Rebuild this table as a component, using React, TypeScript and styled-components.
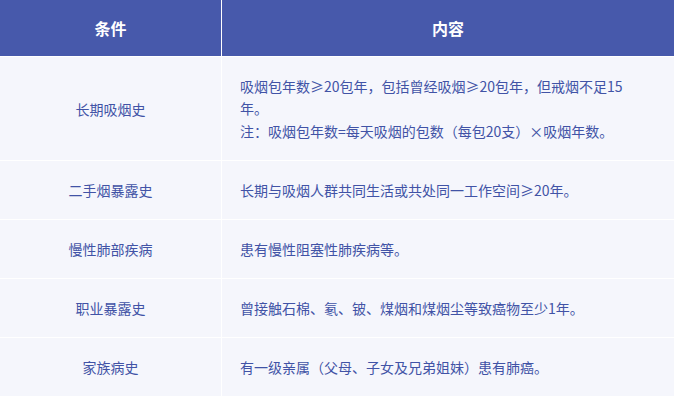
import { FC } from "react";
import styled, { createGlobalStyle } from "styled-components";

interface Row {
    condition: string;
    content: string[];
}

// \u200B lets the line break between "15" and "年", as the original does
const rows: Row[] = [
    {
        condition: "长期吸烟史",
        content: [
            "吸烟包年数≥20包年，包括曾经吸烟≥20包年，但戒烟不足15\u200B年。",
            "注：吸烟包年数=每天吸烟的包数（每包20支）×吸烟年数。",
        ],
    },
    { condition: "二手烟暴露史", content: ["长期与吸烟人群共同生活或共处同一工作空间≥20年。"] },
    { condition: "慢性肺部疾病", content: ["患有慢性阻塞性肺疾病等。"] },
    { condition: "职业暴露史", content: ["曾接触石棉、氡、铍、煤烟和煤烟尘等致癌物至少1年。"] },
    { condition: "家族病史", content: ["有一级亲属（父母、子女及兄弟姐妹）患有肺癌。"] },
];

const App: FC = () => (
    <>
        <GlobalStyle />
        <Table>
            <HeadCell>条件</HeadCell>
            <HeadCell>内容</HeadCell>
            {rows.map((row) => (
                <Row key={row.condition}>
                    <ConditionCell>{row.condition}</ConditionCell>
                    <ContentCell>
                        {row.content.map((line) => (
                            <Paragraph key={line}>{line}</Paragraph>
                        ))}
                    </ContentCell>
                </Row>
            ))}
        </Table>
    </>
);

export default App;

const GlobalStyle = createGlobalStyle`
    body {
        margin: 0;
        background: #ffffff;
        font-family: "Noto Sans CJK SC", "Noto Sans", sans-serif;
    }
`;

const Table = styled.div`
    display: grid;
    grid-template-columns: 221px 1fr;
    column-gap: 1px;
    row-gap: 1px;
    width: 674px;
    background: #ffffff;
`;

const HeadCell = styled.div`
    height: 56px;
    display: flex;
    align-items: center;
    justify-content: center;
    background: #4759ab;
    color: #ffffff;
    font-size: 16px;
    font-weight: 700;
`;

const Row = styled.div`
    display: contents;
`;

const Cell = styled.div`
    background: #f5f6fc;
    color: #4153a6;
    font-size: 14px;
    line-height: 22px;
    padding: 18px;
`;

const ConditionCell = styled(Cell)`
    display: flex;
    align-items: center;
    justify-content: center;
`;

const ContentCell = styled(Cell)`
    display: flex;
    flex-direction: column;
    justify-content: center;
    gap: 1px;
    padding-right: 42px;
`;

const Paragraph = styled.p`
    margin: 0;
`;
